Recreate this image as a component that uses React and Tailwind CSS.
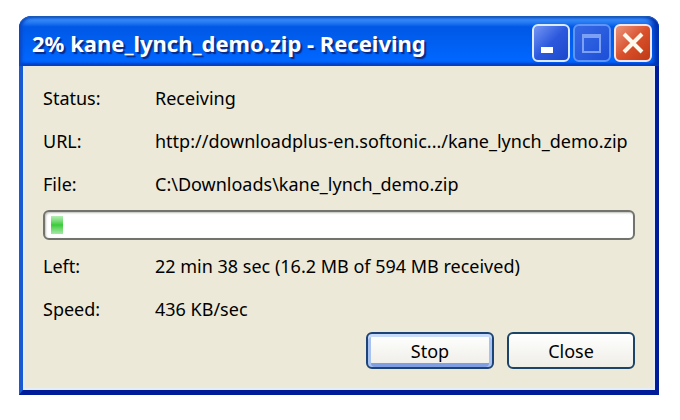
import React from 'react';

const request = [
  { label: 'Status:', value: 'Receiving' },
  { label: 'URL:', value: 'http://downloadplus-en.softonic.../kane_lynch_demo.zip' },
  { label: 'File:', value: 'C:\\Downloads\\kane_lynch_demo.zip' },
];

const transfer = [
  { label: 'Left:', value: '22 min 38 sec (16.2 MB of 594 MB received)' },
  { label: 'Speed:', value: '436 KB/sec' },
];

const InfoList = ({ rows }) => (
  <dl className="grid grid-cols-[112px_1fr] gap-y-[19px]">
    {rows.map((row) => (
      <React.Fragment key={row.label}>
        <dt>{row.label}</dt>
        <dd className="whitespace-nowrap">{row.value}</dd>
      </React.Fragment>
    ))}
  </dl>
);

const ProgressBar = ({ value }) => (
  <div
    role="progressbar"
    aria-label="Download progress"
    aria-valuenow={value}
    aria-valuemin={0}
    aria-valuemax={100}
    className="my-[14px] h-[30px] rounded-md border-2 border-[#73736d] bg-white px-[6px] py-1 shadow-[inset_1px_1px_2px_#bdbdb8]"
  >
    <div
      className="h-[18px] bg-linear-to-b from-[#b4edb4] via-[#35cc38] to-[#a5e8a5]"
      style={{ width: `${value}%` }}
    />
  </div>
);

const TitleBar = () => (
  <header className="flex h-[50px] items-center justify-between rounded-t-xl border-t border-[#1959b8] bg-linear-to-b from-[#3a90fc] from-5% via-[#0058e6] via-20% to-[#0066fe] to-85% pt-1.5 pr-[7px] pb-1 pl-[13px] shadow-[inset_3px_0_3px_#0b48c4,inset_-5px_0_4px_#0030ac,inset_0_-3px_2px_#0046cf]">
    <h1 className="text-[22px] leading-7 font-bold whitespace-nowrap text-white [text-shadow:2px_2px_1px_#0a2a86]">
      2% kane_lynch_demo.zip - Receiving
    </h1>
    <div className="flex gap-[3px]">
      <button
        type="button"
        aria-label="Minimize"
        className="h-[38px] w-[38px] rounded-md border-2 border-[#dcebff] bg-linear-to-br from-[#7595f2] via-[#2c58dd] to-[#1c48cc]"
      >
        <svg viewBox="0 0 34 34" className="h-full w-full">
          <path d="M7 21h12v6H7z" fill="#fff" />
        </svg>
      </button>
      <button
        type="button"
        aria-label="Maximize"
        disabled
        className="h-[38px] w-[38px] rounded-md border-2 border-[#5f95f6] bg-linear-to-br from-[#3769e4] to-[#1c4ed8]"
      >
        <svg viewBox="0 0 34 34" className="h-full w-full">
          <path d="M7 8h19v4H7z" fill="#7ba0f4" />
          <path d="M8 9h17v17H8z" fill="none" stroke="#7ba0f4" strokeWidth="2" />
        </svg>
      </button>
      <button
        type="button"
        aria-label="Close window"
        className="h-[38px] w-[38px] rounded-md border-2 border-[#f5e6ee] bg-linear-to-br from-[#e8937a] via-[#d9502b] to-[#bf3a14]"
      >
        <svg viewBox="0 0 34 34" className="h-full w-full">
          <path d="M8 8l18 18M26 8L8 26" stroke="#fff8ec" strokeWidth="4" />
        </svg>
      </button>
    </div>
  </header>
);

const App = () => {
  return (
    <main className="min-h-screen bg-white pt-4 pr-[21px] pl-[19px] font-['Noto_Sans',sans-serif] text-[18px] leading-6 text-black">
      <section className="rounded-t-xl bg-linear-to-r from-[#0f4fd0] from-50% to-[#001d9c] to-50%">
        <TitleBar />
        <div className="border-x-4 border-b-5 border-t-0 border-l-[#175ad2] border-r-[#001c98] border-b-[#001c98]">
          <div className="border-x-2 border-b-2 border-[#e4edf8] bg-[#ece9d8] px-[18px] pt-5 pb-[19px]">
            <InfoList rows={request} />
            <ProgressBar value={2} />
            <InfoList rows={transfer} />
            <div className="mt-[11px] flex justify-end gap-[13px]">
              <button
                type="button"
                className="h-[37px] w-32 rounded-md border-2 border-[#1c4478] bg-linear-to-b from-white to-[#eeede6] shadow-[inset_0_3px_0_#c8dcfa,inset_3px_0_0_#a9c3f1,inset_-3px_0_0_#a9c3f1,inset_0_-4px_0_#7f9fe2]"
              >
                Stop
              </button>
              <button
                type="button"
                className="h-[37px] w-32 rounded-md border-2 border-[#1c4468] bg-linear-to-b from-white to-[#eeede6]"
              >
                Close
              </button>
            </div>
          </div>
        </div>
      </section>
    </main>
  );
};

export default App;
